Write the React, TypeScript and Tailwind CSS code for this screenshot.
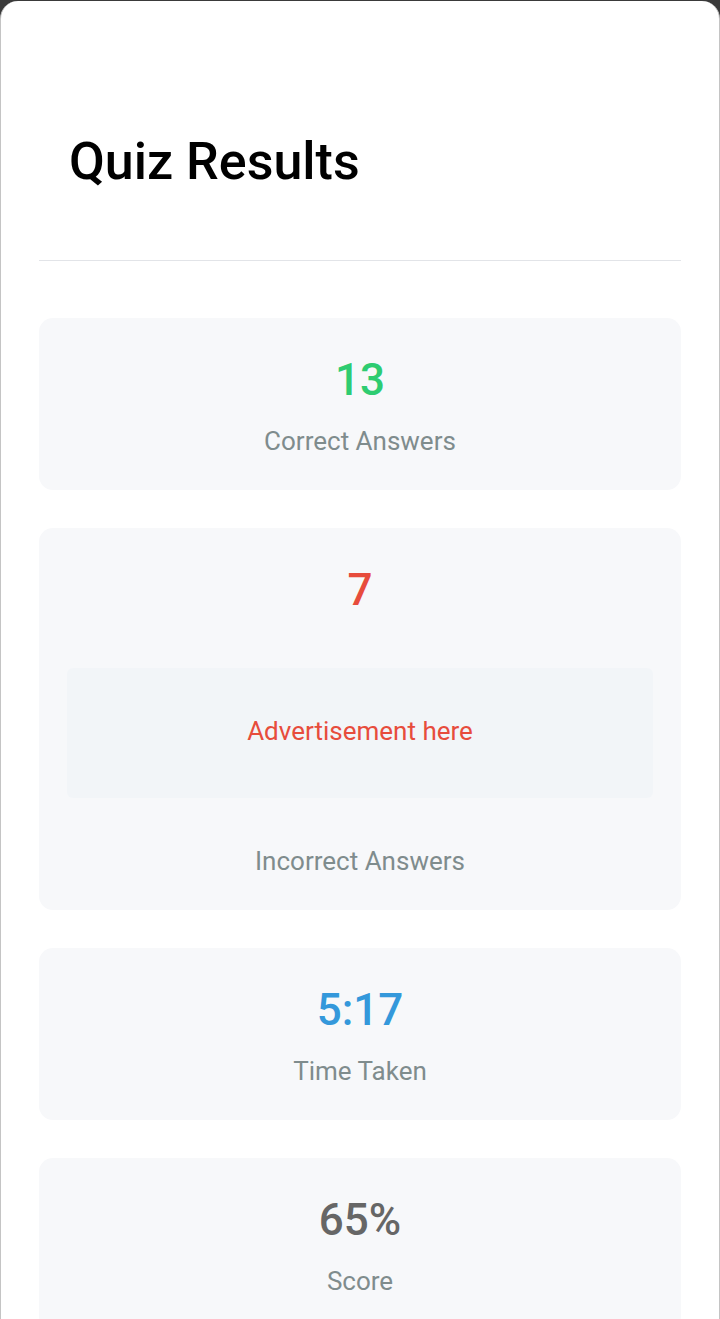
import React from 'react';

const stats = [
  { value: '13', label: 'Correct Answers', color: 'text-[#2ecc71]' },
  { value: '7', label: 'Incorrect Answers', color: 'text-[#e74c3c]', ad: true },
  { value: '5:17', label: 'Time Taken', color: 'text-[#3498db]' },
  { value: '65%', label: 'Score', color: 'text-[#666666]' },
];

function StatCard({ value, label, color, ad }: { value: string; label: string; color: string; ad?: boolean }) {
  return (
    <div className="rounded-[14px] bg-[#f7f8fa] px-[28px] pt-[33px] pb-[31px] text-center">
      <div className={`text-[44px] font-medium leading-[58px] ${color}`}>{value}</div>
      {ad && (
        <div className="mt-[49px] flex h-[130px] items-center justify-center rounded-[6px] bg-[#f2f5f8] pb-[4px] text-[26px] text-[#e74c3c]">
          Advertisement here
        </div>
      )}
      <div className={`${ad ? 'mt-[45px]' : 'mt-[14px]'} text-[26px] leading-[36px] text-[#7f8c8d]`}>{label}</div>
    </div>
  );
}

export default function App() {
  return (
    <div className="h-[1319px] overflow-hidden bg-[#3a3a3a] pt-[1px] font-['Roboto','Liberation_Sans',sans-serif]">
      <div className="h-full rounded-t-[18px] border-x border-[#c4c4c4] bg-white px-[38px]">
        <div className="px-[30px] pt-[130px] pb-[67px]">
          <h1 className="text-[52px] font-medium leading-[62px] text-black">Quiz Results</h1>
        </div>
        <div className="h-px bg-[#e2e4e8]" />
        <div className="mt-[57px] flex flex-col gap-[38px]">
          {stats.map((s) => (
            <StatCard key={s.label} {...s} />
          ))}
        </div>
      </div>
    </div>
  );
}
